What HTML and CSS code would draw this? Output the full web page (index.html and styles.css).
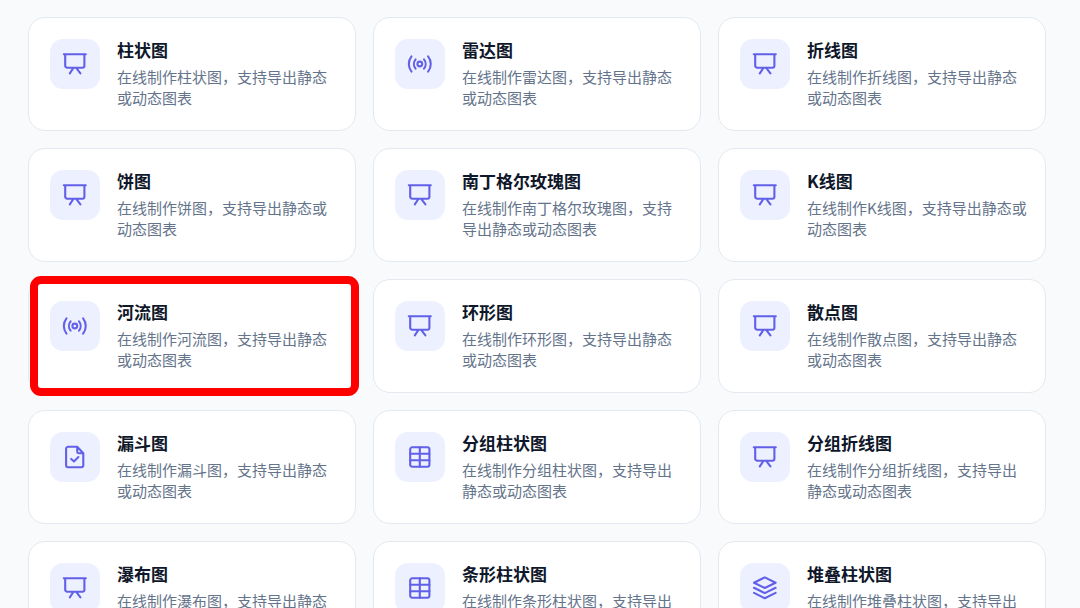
FILE: index.html
```html
<!DOCTYPE html>
<html lang="zh-CN">
<head>
<meta charset="utf-8">
<meta name="viewport" content="width=device-width, initial-scale=1">
<title>在线图表</title>
<link rel="stylesheet" href="styles.css">
</head>
<body>
<svg class="sprite" aria-hidden="true">
  <symbol id="board" viewBox="0 0 26 26"><path d="M1.8 3.3h22M3.2 3.3v11.4a2 2 0 0 0 2 2h15.2a2 2 0 0 0 2-2V3.3M11.2 17.2L7.8 22.4M14.4 17.2L18.4 22.4"/></symbol>
  <symbol id="signal" viewBox="0 0 26 26"><circle cx="12.8" cy="13" r="2.4"/><path d="M8.6 8.4a7.2 7.2 0 0 0 0 9.2M17 8.4a7.2 7.2 0 0 1 0 9.2M4.5 5.4a12.2 12.2 0 0 0 0 15.2M21.1 5.4a12.2 12.2 0 0 1 0 15.2"/></symbol>
  <symbol id="file" viewBox="0 0 26 26"><path d="M15.2 2.8H6.1a2 2 0 0 0-2 2v16.4a2 2 0 0 0 2 2h13.2a2 2 0 0 0 2-2V9.2zM15.2 2.8v4.4a2 2 0 0 0 2 2h4.1M9.2 14.9l2.8 2.6 4.4-4.4"/></symbol>
  <symbol id="grid" viewBox="0 0 26 26"><rect x="3.2" y="3.3" width="19.2" height="19.4" rx="2"/><path d="M12.8 3.3v19.4M3.2 9.8h19.2M3.2 16.2h19.2"/></symbol>
  <symbol id="layers" viewBox="0 0 26 26"><path d="M12.8 2.4l10.8 5.3L12.8 13 2 7.7zM2 12.8l10.8 5.3 10.8-5.3M2 17.9l10.8 5.3 10.8-5.3"/></symbol>
</svg>
<main class="chart-grid">
  <a class="card" href="#bar"><span class="tile"><svg class="icon" aria-hidden="true"><use href="#board"/></svg></span><div class="body"><h2 class="title">柱状图</h2><p class="desc">在线制作柱状图，支持导出静态或动态图表</p></div></a>
  <a class="card" href="#radar"><span class="tile"><svg class="icon" aria-hidden="true"><use href="#signal"/></svg></span><div class="body"><h2 class="title">雷达图</h2><p class="desc">在线制作雷达图，支持导出静态或动态图表</p></div></a>
  <a class="card" href="#line"><span class="tile"><svg class="icon" aria-hidden="true"><use href="#board"/></svg></span><div class="body"><h2 class="title">折线图</h2><p class="desc">在线制作折线图，支持导出静态或动态图表</p></div></a>
  <a class="card" href="#pie"><span class="tile"><svg class="icon" aria-hidden="true"><use href="#board"/></svg></span><div class="body"><h2 class="title">饼图</h2><p class="desc">在线制作饼图，支持导出静态或动态图表</p></div></a>
  <a class="card" href="#rose"><span class="tile"><svg class="icon" aria-hidden="true"><use href="#board"/></svg></span><div class="body"><h2 class="title">南丁格尔玫瑰图</h2><p class="desc">在线制作南丁格尔玫瑰图，支持导出静态或动态图表</p></div></a>
  <a class="card" href="#candle"><span class="tile"><svg class="icon" aria-hidden="true"><use href="#board"/></svg></span><div class="body"><h2 class="title">K线图</h2><p class="desc">在线制作K线图，支持导出静态或动态图表</p></div></a>
  <a class="card card-marked" href="#river"><span class="tile"><svg class="icon" aria-hidden="true"><use href="#signal"/></svg></span><div class="body"><h2 class="title">河流图</h2><p class="desc">在线制作河流图，支持导出静态或动态图表</p></div></a>
  <a class="card" href="#ring"><span class="tile"><svg class="icon" aria-hidden="true"><use href="#board"/></svg></span><div class="body"><h2 class="title">环形图</h2><p class="desc">在线制作环形图，支持导出静态或动态图表</p></div></a>
  <a class="card" href="#scatter"><span class="tile"><svg class="icon" aria-hidden="true"><use href="#board"/></svg></span><div class="body"><h2 class="title">散点图</h2><p class="desc">在线制作散点图，支持导出静态或动态图表</p></div></a>
  <a class="card" href="#funnel"><span class="tile"><svg class="icon" aria-hidden="true"><use href="#file"/></svg></span><div class="body"><h2 class="title">漏斗图</h2><p class="desc">在线制作漏斗图，支持导出静态或动态图表</p></div></a>
  <a class="card" href="#grouped-bar"><span class="tile"><svg class="icon" aria-hidden="true"><use href="#grid"/></svg></span><div class="body"><h2 class="title">分组柱状图</h2><p class="desc">在线制作分组柱状图，支持导出静态或动态图表</p></div></a>
  <a class="card" href="#grouped-line"><span class="tile"><svg class="icon" aria-hidden="true"><use href="#board"/></svg></span><div class="body"><h2 class="title">分组折线图</h2><p class="desc">在线制作分组折线图，支持导出静态或动态图表</p></div></a>
  <a class="card" href="#waterfall"><span class="tile"><svg class="icon" aria-hidden="true"><use href="#board"/></svg></span><div class="body"><h2 class="title">瀑布图</h2><p class="desc">在线制作瀑布图，支持导出静态或动态图表</p></div></a>
  <a class="card" href="#horizontal-bar"><span class="tile"><svg class="icon" aria-hidden="true"><use href="#grid"/></svg></span><div class="body"><h2 class="title">条形柱状图</h2><p class="desc">在线制作条形柱状图，支持导出静态或动态图表</p></div></a>
  <a class="card" href="#stacked-bar"><span class="tile"><svg class="icon" aria-hidden="true"><use href="#layers"/></svg></span><div class="body"><h2 class="title">堆叠柱状图</h2><p class="desc">在线制作堆叠柱状图，支持导出静态或动态图表</p></div></a>
</main>
</body>
</html>
```
FILE: styles.css
```css
* {
  box-sizing: border-box;
}

body {
  margin: 0;
  background: #f9fafc;
  font-family: "Noto Sans CJK SC", "Noto Sans", sans-serif;
}

.sprite {
  display: none;
}

.chart-grid {
  display: grid;
  grid-template-columns: repeat(3, minmax(0, 1fr));
  gap: 17px;
  padding: 17px 34px 17px 28px;
}

.card {
  position: relative;
  display: flex;
  align-items: flex-start;
  gap: 17px;
  padding: 21px 16px 22px 21px;
  border: 1px solid #e4e9ef;
  border-radius: 17px;
  background: #fff;
  color: inherit;
  text-decoration: none;
}

.card-marked::after {
  content: "";
  position: absolute;
  inset: -4px -4px -4px 1px;
  border: 8px solid #f00;
  border-radius: 11px;
}

.tile {
  display: flex;
  flex: none;
  align-items: center;
  justify-content: center;
  width: 50px;
  height: 50px;
  border-radius: 13px;
  background: #edf1ff;
}

.icon {
  width: 26px;
  height: 26px;
  fill: none;
  stroke: #6260e8;
  stroke-width: 2.1;
  stroke-linecap: round;
  stroke-linejoin: round;
}

.body {
  flex: 1;
  min-width: 0;
}

.title {
  margin: 0 0 5px;
  color: #0f172a;
  font-size: 17px;
  font-weight: 700;
  line-height: 22px;
}

.desc {
  margin: 0;
  color: #64748b;
  font-size: 15px;
  line-height: 21px;
}
```
